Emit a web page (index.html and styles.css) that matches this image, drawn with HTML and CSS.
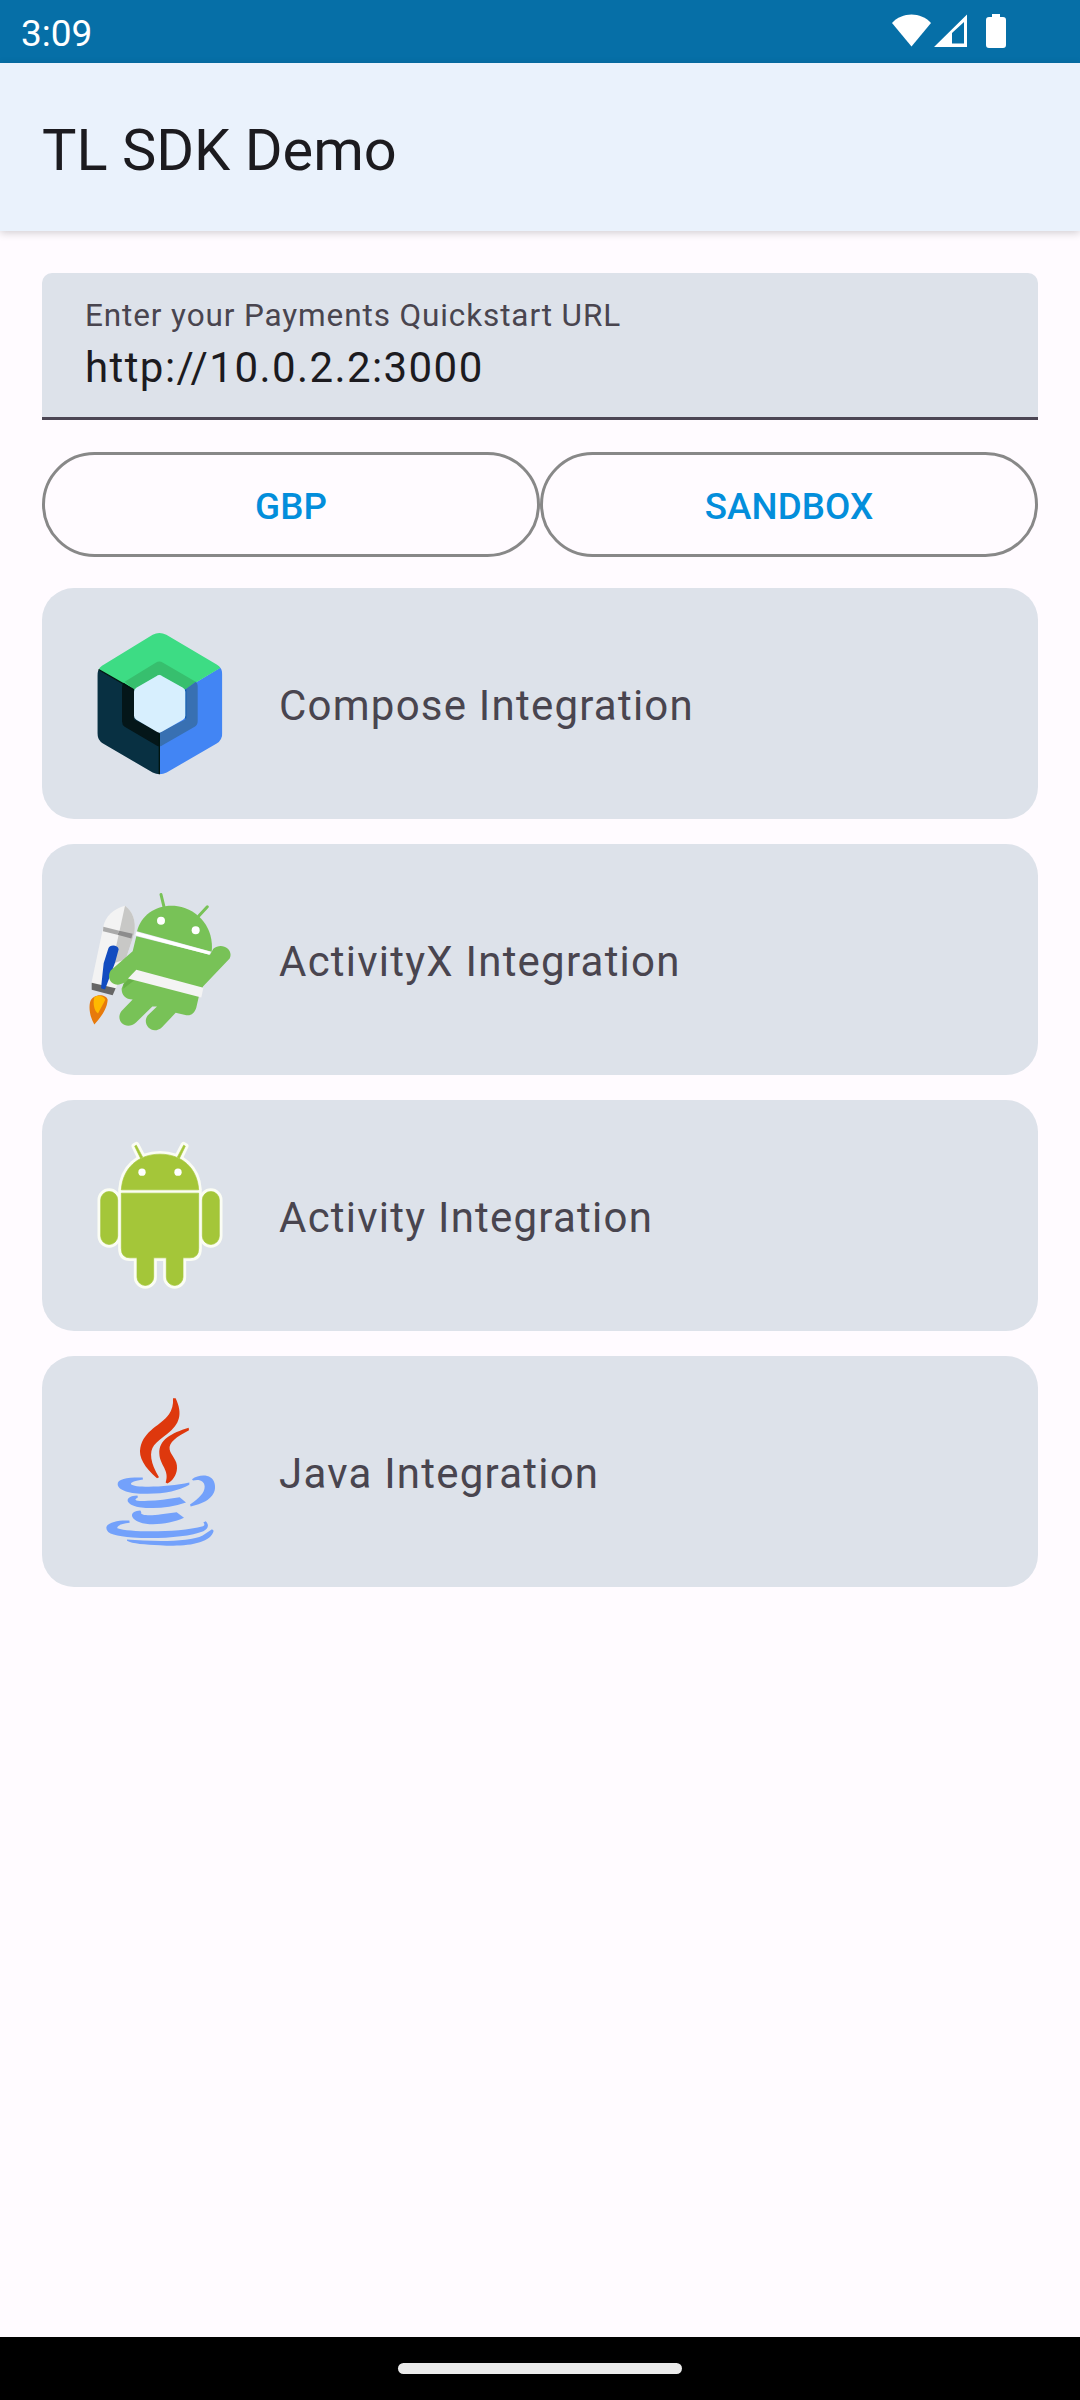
FILE: index.html
```html
<!DOCTYPE html>
<html lang="en">
<head>
<meta charset="utf-8">
<title>TL SDK Demo</title>
<link rel="stylesheet" href="styles.css">
</head>
<body>
<div class="screen">
  <header class="status">
    <span class="time">3:09</span>
    <svg class="status-icons" width="120" height="63" viewBox="0 0 120 63" fill="#fff">
      <path d="M0 23C10 11.500 29 11.500 39 23L19.500 46.500Z"/>
      <path fill-rule="evenodd" d="M42 47L75 14.500V47ZM60 33V43.500H72V22Z"/>
      <path d="M100 14h8v3h3a3 3 0 0 1 3 3v25a3 3 0 0 1-3 3H97a3 3 0 0 1-3-3V20a3 3 0 0 1 3-3h3z"/>
    </svg>
  </header>
  <div class="appbar"><h1 class="title">TL SDK Demo</h1></div>
  <main class="content">
    <div class="field">
      <span class="label">Enter your Payments Quickstart URL</span>
      <span class="value">http://10.0.2.2:3000</span>
    </div>
    <div class="buttons">
      <button class="button">GBP</button>
      <button class="button">SANDBOX</button>
    </div>
    <div class="cards">
      <div class="card">
        <svg class="icon" viewBox="0 10.5 480 480">
          <defs><clipPath id="hex"><path d="M218 43Q238 32 259 43L410 132Q427 142 427 162V338Q427 358 410 369L260 456Q239 467 218 456L69 369Q52 358 52 338V166Q52 146 66 136Z"/></clipPath></defs>
          <g clip-path="url(#hex)">
            <path fill="#4285f4" d="M238 252L440 130V480H238Z"/>
            <path fill="#083042" d="M238 252L30 132V480H238Z"/>
            <path fill="#3ddc84" d="M30 132L238 252L445 128L238 0Z"/>
          </g>
          <path fill="#37bf6e" d="M134 184L227 127Q238 119 249 127L347 184L316 208L238 162L162 208Z"/>
          <path fill="#3870b2" d="M347 184Q353 188 353 196V302Q353 313 344 319L250 373Q244 378 238 378V335L316 297V207Z"/>
          <path fill="#041619" d="M131 187Q126 191 126 200V302Q126 313 134 319L226 373Q232 378 238 378V335L162 297V207Z"/>
          <path stroke="#0c5cb0" stroke-width="4" d="M317 207V294"/>
          <path fill="#d7effe" d="M229 167Q238 160 247 167L309 202Q316 206 316 214V286Q316 294 309 298L247 333Q238 340 229 333L169 298Q162 294 162 286V214Q162 206 169 202Z"/>
          <path stroke="#001510" stroke-width="4" d="M238 338V461M56 147L162 208"/>
        </svg>
        <span class="name">Compose Integration</span>
      </div>
      <div class="card">
        <svg class="icon" viewBox="0 -1.5 480 480">
          <path fill="#f3f3f3" d="M34 309L69 143C75 106 103 84 135 76C160 94 168 124 163 158L108 323Z"/>
          <path fill="#c8c8c6" d="M135 76C160 94 168 124 163 158L137 236L97 250Z"/>
          <path fill="#aaa" d="M70 139L118 151L112 163L69 152Z"/>
          <path fill="#8c8c8c" d="M118 151L158 160L154 174L112 163Z"/>
          <path fill="#666" d="M35 307L107 323L98 344L35 328Z"/>
          <path fill="#124cc0" d="M85 204C88 191 114 192 116 206L105 247L75 327L63 323L71 248Z"/>
          <path fill="#e77a0b" d="M30 366C36 340 78 338 83 358C81 389 60 412 43 432C30 410 26 384 30 366Z"/>
          <path fill="#ffb900" d="M43 350C55 342 72 347 76 358L54 399C42 391 38 367 43 350Z"/>
          <g fill="#78c257">
            <path d="M171 152C185 99 235 69 293 77C357 87 403 145 395 214Z"/>
            <path d="M169 167L390 223L400 205C425 183 462 207 449 234L369 318L356 350L349 381C344 398 332 407 319 404L287 397L246 440C217 466 184 431 203 405L231 378L217 378L168 426C139 452 104 421 124 392L158 357C136 357 124 342 125 324L132 307C102 324 76 298 92 270L158 212Z"/>
          </g>
          <path stroke="#78c257" stroke-width="9" stroke-linecap="round" d="M243 42L252 79M382 79L357 106"/>
          <path fill="#f4f4f4" d="M169 268L370 322L364 351L144 294Z"/>
          <path fill="#68b248" d="M130 313L145 296L162 300L130 325Z"/>
          <g fill="#fff"><path d="M169 154L392 214L388 223L166 164Z"/><circle cx="243" cy="121" r="12"/><circle cx="347" cy="149" r="12"/></g>
        </svg>
        <span class="name">ActivityX Integration</span>
      </div>
      <div class="card">
        <svg class="icon" viewBox="0 -9.5 480 480">
          <defs><g id="robot">
            <path d="M124 152C128 87 174 45 240 45S352 87 356 152Z"/>
            <path d="M124 162H356V328Q356 356 330 356H309V414A25 25 0 0 1 259 414V356H221V414A25 25 0 0 1 171 414V356H150Q124 356 124 328Z"/>
            <rect x="62" y="157" width="51" height="159" rx="25.500"/>
            <rect x="367" y="157" width="51" height="159" rx="25.500"/>
            <path d="M164 21L169 18L188 54L182 58ZM316 21L311 18L292 54L298 58Z"/>
          </g></defs>
          <use href="#robot" fill="#fbfdf4" stroke="#fbfdf4" stroke-width="19" stroke-linejoin="round"/>
          <use href="#robot" fill="#a4c639" stroke="#a4c639" stroke-width="2"/>
          <g fill="#fff"><circle cx="186" cy="99" r="11"/><circle cx="294" cy="99" r="11"/></g>
        </svg>
        <span class="name">Activity Integration</span>
      </div>
      <div class="card">
        <svg class="icon" viewBox="0 -9.5 480 480">
          <path fill="#de380d" d="M279 9H287C309 57 299 86 263 115C224 145 210 155 214 190Q218 216 237 246L231 249C194 218 175 186 181 158C192 104 243 91 267 57Q281 36 279 9Z"/>
          <path fill="#de380d" d="M326 98L327 105C290 125 265 141 269 163C272 181 293 194 291 219C290 241 276 258 262 265L257 262C270 226 239 210 238 176C236 134 274 114 326 98Z"/>
          <g fill="#73a1fb">
            <path d="M188 247L189 253C166 257 151 261 153 267C163 279 266 276 328 262V269C299 286 255 296 203 296C155 297 114 287 113 267C112 251 144 246 188 247Z"/>
            <path d="M336 252C359 236 398 236 404 266C412 303 377 325 332 334L330 328C357 310 374 293 374 275C374 257 358 251 339 256Z"/>
            <path d="M172 301L174 306C158 315 167 319 203 317Q246 315 299 306L318 322C270 339 219 342 178 336C134 329 131 303 172 301Z"/>
            <path d="M181 346L184 351C178 361 210 362 244 357L290 351L312 368C273 386 211 394 179 381C147 369 149 347 181 346Z"/>
            <path d="M148 376L149 383C127 385 110 391 112 399C154 413 297 412 369 393Q377 389 370 382L377 378C389 389 384 402 370 408C328 425 238 432 158 427C110 424 78 417 79 398C80 381 116 374 148 376Z"/>
            <path d="M396 402L401 407C392 447 312 456 240 450C196 449 156 446 141 437V433C214 439 328 442 368 421Z"/>
          </g>
        </svg>
        <span class="name">Java Integration</span>
      </div>
    </div>
  </main>
  <footer class="nav"><div class="handle"></div></footer>
</div>
</body>
</html>
```
FILE: styles.css
```css
* { box-sizing: border-box; }
body { margin: 0; font-family: Roboto, sans-serif; background: #fffbff; }
.screen { width: 1080px; height: 2400px; display: flex; flex-direction: column; }
.status { height: 63px; background: #066fa7; color: #fff; display: flex; justify-content: space-between; align-items: center; padding: 0 68px 0 21px; flex: none; }
.time { font-size: 37px; line-height: 63px; padding-top: 3px; }
.status-icons { display: block; }
.appbar { height: 168px; flex: none; background: #eaf2fc; padding: 0 42px; display: flex; align-items: center; box-shadow: 0 2px 8px rgba(0,0,0,.18); }
.title { margin: 0; padding-top: 6px; font-size: 57.750px; font-weight: 400; color: #1c1b1f; line-height: 74px; }
.content { flex: 1; padding: 42px 42px 0; }
.field { height: 147px; background: #dde2ea; border-radius: 10px 10px 0 0; border-bottom: 3px solid #4c4654; padding: 22px 43px 0; display: flex; flex-direction: column; color: #1c1b1f; }
.label { font-size: 31.500px; line-height: 42px; letter-spacing: .880px; color: #49454f; }
.value { font-size: 42px; line-height: 62px; letter-spacing: 1.420px; }
.buttons { display: flex; margin-top: 32px; }
.button { flex: 1; height: 105px; border: 3px solid #888; border-radius: 53px; background: none; color: #038edb; font: 500 36.750px Roboto, sans-serif; letter-spacing: .1px; padding: 4px 0 0; }
.cards { display: flex; flex-direction: column; gap: 25px; margin-top: 31px; }
.card { height: 231px; border-radius: 32px; background: #dde2ea; display: flex; align-items: center; padding-left: 38px; }
.icon { width: 160px; height: 160px; flex: none; }
.name { margin-left: 39px; padding-top: 4px; font-size: 42px; letter-spacing: 1.230px; color: #49454f; }
.nav { height: 63px; flex: none; background: #000; display: flex; justify-content: center; align-items: center; }
.handle { width: 284px; height: 11px; border-radius: 6px; background: #ebebeb; }
```
